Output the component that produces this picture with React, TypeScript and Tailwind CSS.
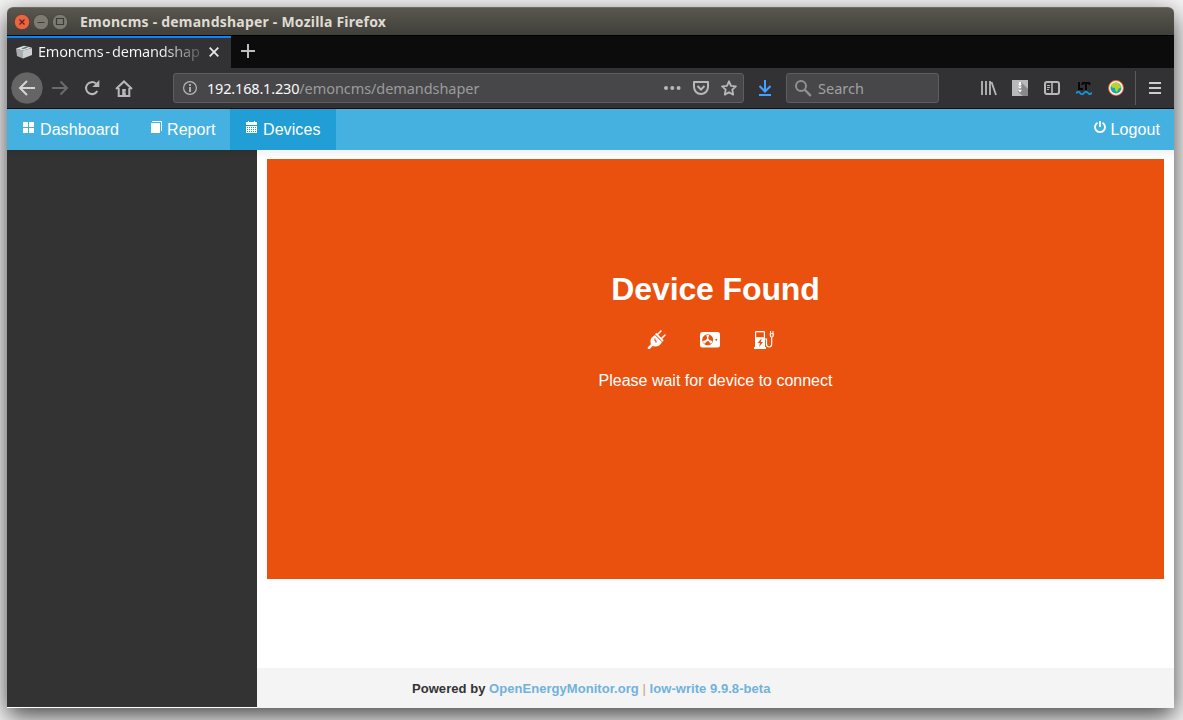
import type { ReactNode } from "react";

const ui = "font-['Noto_Sans',sans-serif]";

function TitleBar() {
  return (
    <header className={`${ui} flex h-[28px] shrink-0 items-center rounded-t-[6px] border-t border-[#6d6b62] bg-linear-to-b from-[#59574e] to-[#403f3a] pl-[7px]`}>
      <div className="flex gap-[3px]">
        <svg width="16" height="16" viewBox="0 0 16 16">
          <circle cx="8" cy="8" r="7.700" fill="#ed6540" stroke="#34332f" strokeWidth=".6" />
          <path d="M5.500 5.500l5 5m0-5l-5 5" stroke="#58261b" strokeWidth="1.300" />
        </svg>
        <svg width="16" height="16" viewBox="0 0 16 16">
          <circle cx="8" cy="8" r="7.700" fill="#7c7a71" stroke="#34332f" strokeWidth=".6" />
          <path d="M4.500 8.500h7" stroke="#3c3b37" />
        </svg>
        <svg width="16" height="16" viewBox="0 0 16 16">
          <circle cx="8" cy="8" r="7.700" fill="#7c7a71" stroke="#34332f" strokeWidth=".6" />
          <path d="M4.500 4.500h7v6h-7z" fill="none" stroke="#3c3b37" strokeWidth="1.200" />
        </svg>
      </div>
      <h1 className="ml-[12px] whitespace-nowrap text-[14px] font-bold tracking-[0.22px] text-[#dfdbd2]">
        Emoncms - demandshaper - Mozilla Firefox
      </h1>
    </header>
  );
}

function TabStrip() {
  return (
    <div className={`${ui} flex h-[33px] shrink-0 border-t border-black bg-[#0c0c0d]`}>
      <div className="flex w-[224px] items-center border-t-2 border-[#0a84ff] bg-[#323234] pb-[2px] pl-[9px]">
        <svg width="16" height="14" viewBox="0 0 16 14">
          <path d="M0 3.500l7 2v8L1 11z" fill="#a9abad" />
          <path d="M7 5.500L16 3v7l-9 3.500z" fill="#cfd0d1" />
          <path d="M0 3.500L8 .7l8 2.100-9 2.700z" fill="#dfe2e4" />
          <path d="M5 3.600l5-2 2.500.7-5 2z" fill="#4e8398" />
        </svg>
        <span className="ml-[6px] w-[166px] whitespace-nowrap bg-linear-to-r from-[#f9f9fa] from-75% to-[#4a4a4c] bg-clip-text text-[14.500px] tracking-[-0.2px] text-transparent [word-spacing:-1.500px]">
          Emoncms - demandshap
        </span>
        <svg className="ml-[5px]" width="10" height="10" viewBox="0 0 10 10">
          <path d="M.7.7l8.600 8.600m0-8.600L.7 9.300" stroke="#e6e6e6" strokeWidth="1.800" />
        </svg>
      </div>
      <svg className="ml-[10px] mt-[8px]" width="14" height="14" viewBox="0 0 14 14">
        <path d="M7 0v14M0 7h14" stroke="#bebebf" strokeWidth="2" />
      </svg>
    </div>
  );
}

function Toolbar() {
  return (
    <div className={`${ui} flex h-[41px] shrink-0 items-center border-b border-[#0c0c0d] bg-[#323234] text-[#b8b8b9]`}>
      <svg className="ml-[3px]" width="34" height="34" viewBox="0 0 34 34">
        <circle cx="17" cy="17" r="16.200" fill="#656566" stroke="#28282a" strokeWidth=".7" />
        <path d="M25 17H10m7-7l-7 7 7 7" fill="none" stroke="#d5d5d5" strokeWidth="2" />
      </svg>
      <svg className="ml-[8px]" width="17" height="16" viewBox="0 0 17 16">
        <path d="M0 8h15M8.500 1.500L15 8l-6.500 6.500" fill="none" stroke="#6b6b6d" strokeWidth="2" />
      </svg>
      <svg className="ml-[15px]" width="16" height="16" viewBox="0 0 16 16">
        <path d="M12 3.600A6 6 0 1 0 13.300 11" fill="none" stroke="currentColor" strokeWidth="2" />
        <path d="M15.300 0v7H8.300z" fill="currentColor" />
      </svg>
      <svg className="ml-[15px]" width="18" height="17" viewBox="0 0 18 17">
        <path d="M1 9l8-7.600L17 9M3.700 8v8h10.600V8" fill="none" stroke="currentColor" strokeWidth="2" />
        <path d="M7.200 9h3.600v7H7.200z" fill="currentColor" />
        <path d="M9.700 12h1" stroke="#323234" />
      </svg>
      <div className="ml-[40px] flex h-[30px] w-[571px] items-center rounded-[3px] border border-[#5e5e60] bg-[#474749] pl-[9px]">
        <svg width="14" height="14" viewBox="0 0 14 14">
          <circle cx="7" cy="7" r="6.400" fill="none" stroke="currentColor" strokeWidth="1.200" />
          <path d="M7 3v2M7 6v5" stroke="currentColor" strokeWidth="1.800" />
        </svg>
        <span className="ml-[10px] mt-[2px] w-[452px] whitespace-nowrap text-[14.500px] tracking-[-0.070px] text-[#9b9b9d]">
          <span className="tracking-[-0.180px] text-[#f9f9fa]">192.168.1.230</span>/emoncms/demandshaper
        </span>
        <svg className="ml-[5px]" width="17" height="4" viewBox="0 0 17 4">
          <g fill="currentColor"><circle cx="2" cy="2" r="2" /><circle cx="8.300" cy="2" r="2" /><circle cx="14.600" cy="2" r="2" /></g>
        </svg>
        <svg className="ml-[12px]" width="16" height="14" viewBox="0 0 16 14">
          <path d="M1 1h14v5a7 7 0 0 1-14 0z" fill="none" stroke="currentColor" strokeWidth="2" strokeLinejoin="round" />
          <path d="M4.500 5L8 8.500 11.500 5" fill="none" stroke="currentColor" strokeWidth="2" />
        </svg>
        <svg className="ml-[12px]" width="16" height="16" viewBox="0 0 16 16">
          <path d="M8 1.300l2 4.500 4.900.6-3.600 3.300.9 4.900L8 12.200l-4.200 2.400.9-4.900L1.100 6.400 6 5.800z" fill="none" stroke="currentColor" strokeWidth="1.800" strokeLinejoin="round" />
        </svg>
      </div>
      <svg className="ml-[14px]" width="13" height="16" viewBox="0 0 13 16">
        <path d="M7 0v11M1.500 6L7 11.500 12.500 6M1 15h12" fill="none" stroke="#45a1ff" strokeWidth="2" />
      </svg>
      <div className="ml-[15px] flex h-[30px] w-[153px] items-center rounded-[3px] border border-[#5e5e60] bg-[#474749] pl-[8px]">
        <svg width="17" height="17" viewBox="0 0 17 17">
          <circle cx="6" cy="6" r="5" fill="none" stroke="#919193" strokeWidth="2" />
          <path d="M9.500 9.500l6.300 6.300" stroke="#919193" strokeWidth="2.400" />
        </svg>
        <span className="ml-[6px] mt-[2px] text-[14.500px] text-[#a0a0a2]">Search</span>
      </div>
      <svg className="ml-[42px]" width="16" height="16" viewBox="0 0 16 16">
        <path d="M1 1v14M5 1v14M9 1v14M10.500 2l4.500 13" fill="none" stroke="currentColor" strokeWidth="1.800" />
      </svg>
      <svg className="ml-[15px]" width="16" height="16" viewBox="0 0 16 16">
        <path d="M0 0h16v16H0z" fill="#b9b9ba" />
        <path d="M9 2l7 7v7h-5l-5-4z" fill="#88888a" />
        <path d="M7 2h2v2h1L8 6.200 6 4h1zM6 6.500h4L8 9zM6 9.700h4L8 12.500z" fill="white" />
      </svg>
      <svg className="ml-[16px]" width="16" height="14" viewBox="0 0 16 14">
        <rect x="1" y="1" width="14" height="12" rx="2" fill="none" stroke="currentColor" strokeWidth="2" />
        <path d="M8 1v12" stroke="currentColor" strokeWidth="1.600" />
        <path d="M3 4.500h3M3 6.500h3M3 8.500h2" stroke="currentColor" />
      </svg>
      <svg className="ml-[16px]" width="16" height="14" viewBox="0 0 16 14">
        <path d="M3 1v7h4M6 2h8M10 2v7M6.500 2v2M13.500 2v2" fill="none" stroke="#080808" strokeWidth="2" />
        <path d="M0 12.500q2-3 4-.5t4 0 4 0 4-.5" fill="none" stroke="#1496d2" strokeWidth="2" />
      </svg>
      <svg className="ml-[16px]" width="16" height="16" viewBox="0 0 16 16">
        <circle cx="8" cy="8" r="7.300" fill="#16a6b8" stroke="#f0623a" strokeWidth="1.300" />
        <circle cx="8" cy="8" r="6.200" fill="none" stroke="#fff5db" strokeWidth="1.500" />
        <path d="M4 4q3-2 6-1l3 3-.5 2-2 .5-1.500 3.500-1.500-1-.5-3-3-.5-1-2z" fill="#bcd329" />
      </svg>
      <div className="ml-[11px] h-[34px] w-px bg-[#5b5b5d]" />
      <svg className="ml-[13px]" width="12" height="12" viewBox="0 0 12 12">
        <path d="M0 1h12M0 6h12M0 11h12" stroke="#cccccd" strokeWidth="2" />
      </svg>
    </div>
  );
}

function NavItem({ icon, label, className }: { icon: ReactNode; label: string; className: string }) {
  return (
    <a className={`flex h-full items-start whitespace-nowrap pt-[9px] text-[16px] leading-[24px] tracking-[0.080px] text-white ${className}`}>
      {icon}
      <span>{label}</span>
    </a>
  );
}

function AppNav() {
  return (
    <nav className="flex h-[41px] shrink-0 bg-[#45b1e1]">
      <NavItem className="w-[128px] pl-[16px]" label="Dashboard" icon={
        <svg className="mr-[6px] mt-[4px]" width="11" height="11" viewBox="0 0 11 11">
          <path d="M0 0h5v5H0zM6 0h5v5H6zM0 6h5v5H0zM6 6h5v5H6z" fill="white" />
        </svg>
      } />
      <NavItem className="w-[95px] pl-[16px]" label="Report" icon={
        <svg className="mr-[5px] mt-[3px]" width="11" height="13" viewBox="0 0 11 13">
          <path d="M0 2h9v10H0z" fill="white" />
          <path d="M1 .5h9.500V10" fill="none" stroke="white" />
        </svg>
      } />
      <NavItem className="w-[106px] bg-[#209ed5] pl-[16px]" label="Devices" icon={
        <svg className="mr-[6px] mt-[3px]" width="11" height="12" viewBox="0 0 11 12">
          <path d="M0 1h11v3H0zM2 0h1v1H2zM8 0h1v1H8zM0 5h11v7H0z" fill="white" />
          <path d="M1 6.500h9M1 8.500h9M1 10.500h9" stroke="#209ed5" strokeDasharray="1 1" />
        </svg>
      } />
      <NavItem className="ml-auto pr-[14px]" label="Logout" icon={
        <svg className="mr-[5px] mt-[3px]" width="12" height="12" viewBox="0 0 12 12">
          <path d="M3.500 1.800a5 5 0 1 0 5 0M6 0v6" fill="none" stroke="white" strokeWidth="1.800" />
        </svg>
      } />
    </nav>
  );
}

function DeviceIcons() {
  return (
    <div className="mt-[21px] flex h-[20px] items-center pl-[380px]">
      <svg width="20" height="20" viewBox="0 0 20 20">
        <path d="M2 18l4-4M10.500 4.500L14 1M14.500 8.500L18 5" stroke="white" strokeWidth="1.500" strokeLinecap="round" />
        <path d="M.8 17.300l3-3 1.800 1.800-2.800 2.800c-1.500.5-2.500-.5-2-1.600z" fill="white" />
        <path d="M3.500 12q-.5-4.500 4.500-7l7 7q-2.500 5-7.500 4.500-4-.500-4-4.500z" fill="white" />
        <path d="M8.700 3.500l7.300 7.500" stroke="white" strokeWidth="1.800" />
        <path d="M9 5.600l5.200 5.200" stroke="#ea510e" strokeWidth=".6" />
        <path d="M8 8.500v2l1 .3v2" fill="none" stroke="#ea510e" strokeWidth="1.100" />
      </svg>
      <svg className="ml-[33px]" width="20" height="16" viewBox="0 0 20 16">
        <rect width="20" height="15.500" rx="2.500" fill="white" />
        <circle cx="7.700" cy="7.800" r="5.500" fill="#ea510e" />
        <circle cx="7.700" cy="7.800" r="1.500" fill="white" />
        <path d="M7.700 7.500L6.300 3.300q1.500-1.200 2.900 0zM7.200 7.700L3 9q-.2 2 1.700 2.700L8 8zM8.200 7.700l4.200 1.300q.2 2-1.700 2.700L7.500 8z" fill="white" />
        <circle cx="16.300" cy="7.800" r="1" fill="#ea510e" />
      </svg>
      <svg className="ml-[34px]" width="21" height="20" viewBox="0 0 21 20">
        <path d="M1 2.200Q1 1 2.200 1h7.600Q11 1 11 2.200V18H1zM0 17h12v2H0z" fill="white" />
        <path d="M2.200 2.300h7.600v4.900H2.200z" fill="#ea510e" />
        <path d="M7 9l-3.500 4H6l-1 4 4-5H6.700l1-3z" fill="#ea510e" />
        <path d="M11 9h1.500v5q0 3 2.600 3t2.600-3V7.500" fill="none" stroke="white" strokeWidth="1.200" />
        <path d="M15.700 3.200h4.200V5q0 2.500-2.200 2.800Q15.700 7.500 15.700 5zM16.100 1h1v3h-1zM18.500 1h1v3h-1z" fill="white" />
        <path d="M17.800 4v2.500" stroke="#ea510e" strokeWidth="1.300" />
      </svg>
    </div>
  );
}

export default function App() {
  return (
    <div className="h-[720px] w-[1183px] overflow-hidden bg-[#f4f4f4] pl-[7px] pt-[7px] font-['Liberation_Sans',sans-serif]">
      <div className="flex h-[701px] w-[1167px] flex-col rounded-t-[6px] shadow-[0_8px_24px_rgba(0,0,0,0.72)]">
        <TitleBar />
        <TabStrip />
        <Toolbar />
        <AppNav />
        <div className="flex grow bg-white">
          <aside className="mb-px w-[250px] shrink-0 bg-linear-to-b from-[#2f2f2f] to-[#333333] to-[8px]" />
          <main className="flex grow flex-col bg-linear-to-b from-[#f2f2f2] to-white to-[9px] pt-[9px]">
            <section className="mx-[10px] h-[420px] bg-[#ea510e] text-white">
              <h2 className="pt-[110px] text-center text-[32px] font-bold leading-[40px] tracking-[-0.120px]">Device Found</h2>
              <DeviceIcons />
              <p className="mt-[20px] text-center text-[16px] leading-[22px]">Please wait for device to connect</p>
            </section>
            <footer className="mt-auto h-[40px] whitespace-nowrap bg-[#f4f4f4] pl-[155px] text-[13px] font-bold leading-[41px] tracking-[0.045px] text-[#333333]">
              Powered by <a className="text-[#70b2dc]">OpenEnergyMonitor.org</a> <span className="font-normal text-[#cc9c78]">|</span> <a className="text-[#70b2dc]">low-write 9.9.8-beta</a>
            </footer>
          </main>
        </div>
      </div>
    </div>
  );
}
